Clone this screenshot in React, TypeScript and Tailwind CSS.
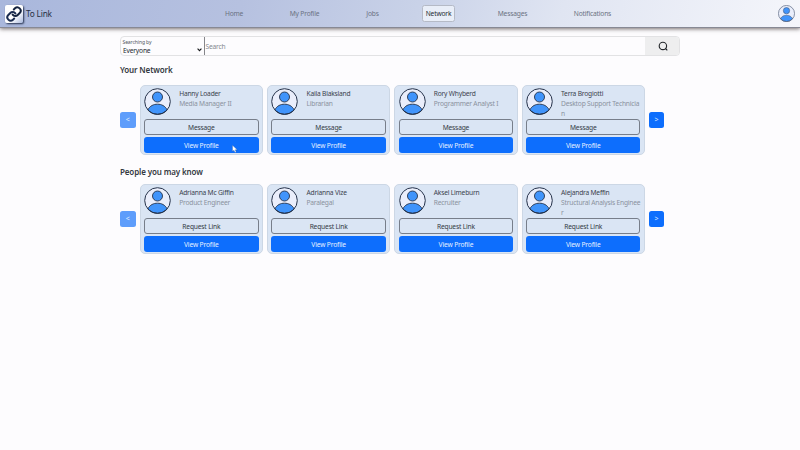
import React from "react";

type Person = { name: string; title: string };

const network: Person[] = [
  { name: "Hanny Loader", title: "Media Manager II" },
  { name: "Kaila Blaksland", title: "Librarian" },
  { name: "Rory Whyberd", title: "Programmer Analyst I" },
  { name: "Terra Brogiotti", title: "Desktop Support Technician" },
];

const suggestions: Person[] = [
  { name: "Adrianna Mc Giffin", title: "Product Engineer" },
  { name: "Adrianna Vize", title: "Paralegal" },
  { name: "Aksel Limeburn", title: "Recruiter" },
  { name: "Alejandra Meffin", title: "Structural Analysis Engineer" },
];

function Avatar({ className, stroke }: { className: string; stroke: string }) {
  return (
    <svg viewBox="0 0 27 27" className={className} fill="none">
      <circle cx="13.5" cy="13.5" r="12.8" fill="#eaeefb" />
      <path d="M3.8 21.9C6 17.8 9.5 16.2 13.5 16.2S21 17.8 23.2 21.9A12.8 12.8 0 0 1 3.8 21.9Z" fill="#4094fb" stroke={stroke} strokeWidth="0.9" />
      <circle cx="13.5" cy="9" r="5" fill="#4094fb" stroke={stroke} strokeWidth="0.9" />
      <circle cx="13.5" cy="13.5" r="12.8" stroke={stroke} strokeWidth="1" />
    </svg>
  );
}

function Card({ person, action }: { person: Person; action: string }) {
  return (
    <div className="flex h-[70px] w-[123.3px] flex-col rounded-[5px] border border-[#ccd7e5] bg-[#dae5f4] px-[3.4px] pt-[1.8px]">
      <div className="flex h-[31.7px] shrink-0">
        <Avatar className="h-[27px] w-[27px] shrink-0" stroke="#25324a" />
        <div className="w-[89px] shrink-0 pl-[8.1px] pt-[0.8px] text-[6.67px] leading-[10px] tracking-[-0.2px]">
          <div className="whitespace-nowrap text-[#3b434e]">{person.name}</div>
          <div className="w-[80.7px] break-all text-[#8a929e]">{person.title}</div>
        </div>
      </div>
      <button className="h-[16px] shrink-0 rounded-[3px] border border-[#777e8a] text-[6.67px] leading-[15px] tracking-[-0.17px] text-[#343b45]">{action}</button>
      <button className="mt-[1.2px] h-[16px] shrink-0 rounded-[3px] bg-[#0d6efd] text-[6.67px] leading-[17px] tracking-[-0.15px] text-[#e6f0ff]">View Profile</button>
    </div>
  );
}

function Carousel({ people, action }: { people: Person[]; action: string }) {
  return (
    <div className="flex items-center gap-[4px]">
      <button className="h-[16px] w-[15.7px] rounded-[2.5px] bg-[#5e9dfb] text-[7px] leading-[16px] text-[#dce9fd]">&lt;</button>
      <div className="flex gap-[4px]">
        {people.map((p) => (
          <Card key={p.name} person={p} action={action} />
        ))}
      </div>
      <button className="h-[16px] w-[15.5px] rounded-[2.5px] bg-[#0d6efd] text-[7px] leading-[16px] text-[#cfe1ff]">&gt;</button>
    </div>
  );
}

function Logo() {
  return (
    <div className="flex h-[18px] w-[18px] items-center justify-center rounded-[2px] bg-linear-to-br from-white from-60% to-[#a9b8dc] shadow-[1px_1px_2px_#26324e]">
      <svg viewBox="0 0 24 24" className="h-[16px] w-[16px]" fill="none" strokeLinecap="round" strokeLinejoin="round">
        <path d="M10 13a5 5 0 0 0 7.54.54l3-3a5 5 0 0 0-7.07-7.07l-1.72 1.71" stroke="#14233f" strokeWidth="3" />
        <path d="M14 11a5 5 0 0 0-7.54-.54l-3 3a5 5 0 0 0 7.07 7.07l1.71-1.71" stroke="#1b2c50" strokeWidth="3" />
      </svg>
    </div>
  );
}

export default function App() {
  return (
    <div className="relative h-[450px] w-[800px] overflow-hidden bg-[#fdfcfe] font-['Noto_Sans','Open_Sans',sans-serif]">
      <header className="flex h-[28px] items-center border-b border-[#878994] bg-[linear-gradient(105deg,#a9b7dc_0%,#b6c1e0_30%,#c9d2e8_52%,#e0e5f2_70%,#f5f6fb_100%)] shadow-[0_1px_4px_rgba(60,50,50,0.7)]">
        <div className="flex w-[200px] items-center gap-[3px] pl-[5px]">
          <Logo />
          <span className="pt-[1px] text-[8.3px] tracking-[-0.2px] text-[#273044]">To Link</span>
        </div>
        <nav className="grid grid-cols-[68px_73px_63px_69px_79px_81px] items-center text-center text-[6.67px] tracking-[-0.18px] text-[#6b7282]">
          <span>Home</span>
          <span>My Profile</span>
          <span>Jobs</span>
          <span className="mx-auto h-[17px] w-[32.5px] rounded-[2.5px] border border-[#b5bac6] bg-[#e9eef8] leading-[16px] text-[#252a33]">Network</span>
          <span>Messages</span>
          <span>Notifications</span>
        </nav>
        <Avatar className="ml-auto mr-[5px] h-[17px] w-[17px]" stroke="#4b5a74" />
      </header>

      <main className="mx-auto w-[560px] pt-[8px]">
        <div className="flex h-[20px] overflow-hidden rounded-[4px] border border-[#e2e2e4]">
          <div className="flex w-[83.5px] flex-col border-r border-[#85858a] pl-[1.5px] pt-[1.5px]">
            <span className="text-[5px] leading-[7px] tracking-[-0.1px] text-[#50555c]">Searching by</span>
            <span className="flex items-center justify-between pl-[0.5px] pr-[2px] text-[6.67px] leading-[9px] tracking-[-0.18px] text-[#24292f]">
              Everyone
              <svg viewBox="0 0 6 4" className="h-[3.5px] w-[5px]" fill="none" stroke="#17191c" strokeWidth="1.4"><path d="M.7.7 3 3 5.3.7" /></svg>
            </span>
          </div>
          <div className="flex-1 pl-[1px] text-[6.67px] leading-[19px] tracking-[-0.18px] text-[#85898f]">Search</div>
          <div className="flex w-[34px] items-center justify-center bg-[#eeeeef] pl-[1px]">
            <svg viewBox="0 0 10 10" className="h-[10px] w-[10px]" fill="none" stroke="#25282c" strokeWidth="1.15"><circle cx="4.9" cy="4.9" r="3.7" /><path d="m7.5 7.5 1.8 1.8" /></svg>
          </div>
        </div>
        <h2 className="mt-[8px] h-[12px] text-[8px] font-semibold leading-[12px] tracking-[-0.13px] text-[#343941]">Your Network</h2>
        <div className="mt-[9px]"><Carousel people={network} action="Message" /></div>
        <h2 className="mt-[11px] h-[12px] text-[8px] font-semibold leading-[12px] tracking-[-0.13px] text-[#343941]">People you may know</h2>
        <div className="mt-[6px]"><Carousel people={suggestions} action="Request Link" /></div>
      </main>

      <svg viewBox="0 0 6 8" className="absolute left-[232px] top-[145px] h-[8px] w-[6px]"><path d="M.5.3v6L2 5.2l1 2.2 1.2-.5-1-2.1h2Z" fill="#fff" stroke="#31558c" strokeWidth=".3" /></svg>
    </div>
  );
}
